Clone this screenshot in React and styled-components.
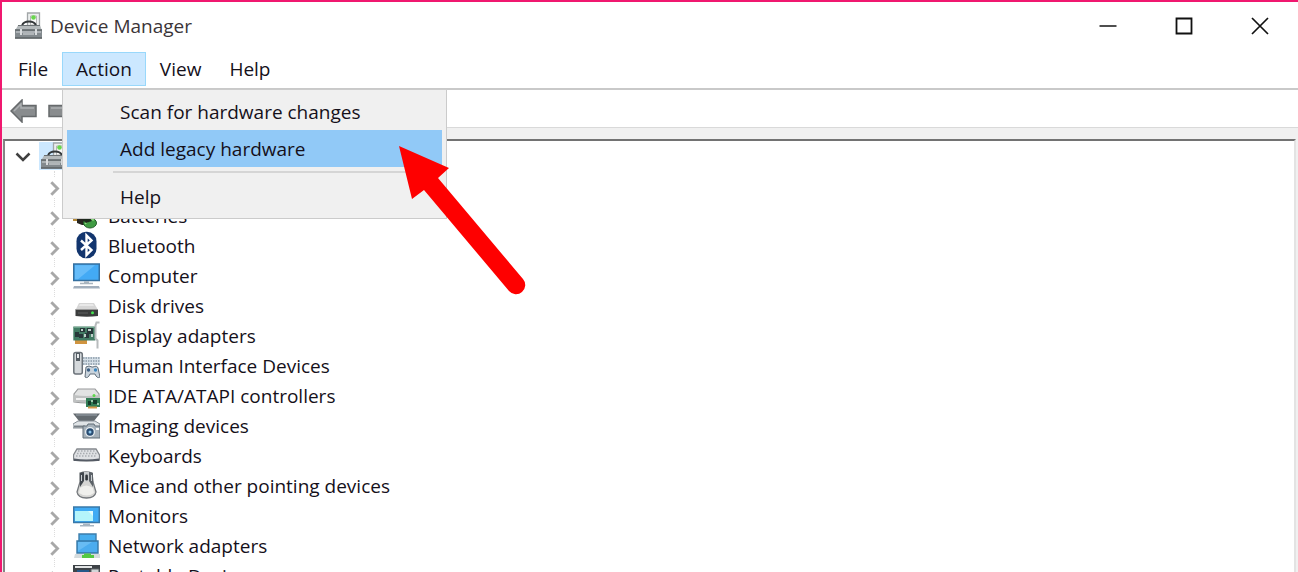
import React, { useState } from "react";
import styled, { createGlobalStyle } from "styled-components";

const GlobalStyle = createGlobalStyle`
  * {
    box-sizing: border-box;
  }

  body {
    margin: 0;
    overflow: hidden;
    background: #fff;
  }

  button {
    font: inherit;
    color: inherit;
    border: none;
    padding: 0;
    background: none;
  }

  svg {
    display: block;
    flex: none;
  }
`;

const Window = styled.main`
  position: relative;
  display: flex;
  flex-direction: column;
  height: 100vh;
  border-top: 2px solid #f0186f;
  border-left: 2px solid #f0186f;
  background: #fff;
  color: #15101a;
  font-family: "Open Sans", "Noto Sans", sans-serif;
  font-size: 19px;
  line-height: 30px;
  overflow: hidden;
`;

const TitleBar = styled.header`
  display: flex;
  align-items: center;
  justify-content: space-between;
  flex: none;
  height: 50px;
  padding: 0 0 2px 13px;
`;

const Title = styled.h1`
  display: flex;
  align-items: center;
  gap: 7px;
  margin: 0;
  color: #3b3538;
  font-size: 19px;
  font-weight: 400;
`;

const WindowButtons = styled.div`
  display: flex;
  height: 100%;
`;

const WindowButton = styled.button`
  display: flex;
  align-items: center;
  justify-content: center;
  width: 76px;

  &:hover {
    background: #e5e5e5;
  }
`;

const MenuBar = styled.nav`
  display: flex;
  flex: none;
  height: 38px;
  padding: 0 2px 2px;
  border-bottom: 2px solid #c9c9c9;
`;

const MenuEntry = styled.div`
  position: relative;
  display: flex;
`;

const MenuButton = styled.button`
  padding: 0 13px;
  border: 1px solid ${(props) => (props.$open ? "#99d8fb" : "transparent")};
  background: ${(props) => (props.$open ? "#cce8ff" : "transparent")};
`;

const Menu = styled.div`
  position: absolute;
  z-index: 2;
  top: 100%;
  left: 0;
  display: flex;
  flex-direction: column;
  width: 385px;
  margin-top: 3px;
  padding: 3px 4px;
  border: 1px solid #cbcbcb;
  background: #f0f0f0;
`;

const MenuItem = styled.button`
  height: 37px;
  padding-left: 53px;
  text-align: left;
  background: ${(props) => (props.$active ? "#91c9f7" : "transparent")};
`;

const MenuSeparator = styled.hr`
  width: calc(100% - 46px);
  margin: 4px 0 5px 46px;
  border: none;
  border-top: 2px solid #d5d5d5;
`;

const Toolbar = styled.div`
  display: flex;
  align-items: center;
  flex: none;
  gap: 11px;
  height: 38px;
  padding: 4px 8px 0;
  border-bottom: 1px solid #d9d9d9;
`;

const Content = styled.section`
  display: flex;
  flex: 1;
  min-height: 0;
  padding: 11px 2px 0 1px;
  background: #f0f0f0;
`;

const TreePane = styled.div`
  flex: 1;
  border-top: 2px solid #727272;
  border-left: 2px solid #858585;
  border-right: 2px solid #e3e3e3;
  background: #fff;
  overflow: hidden;
`;

const RootRow = styled.div`
  display: flex;
  align-items: center;
  gap: 6px;
  height: 30px;
  padding-left: 8px;
`;

const RootIcon = styled.span`
  width: 90px;
  padding: 0 2px;
  background: #cce8ff;
`;

const Branch = styled.ul`
  margin: 0 0 0 49px;
  padding: 0;
  border-left: 1px dotted #dcdcdc;
  list-style: none;
`;

const Row = styled.li`
  display: flex;
  align-items: center;
  height: 30px;
  margin-left: -6px;
`;

const Toggle = styled.button`
  display: flex;
  align-items: center;
  justify-content: center;
  width: 12px;
  height: 20px;
  margin-top: 4px;
  background: #fff;
`;

const RootToggle = styled(Toggle)`
  width: 20px;
  margin-top: 2px;
`;

const RowIcon = styled.svg`
  width: 27px;
  height: 30px;
  margin: 0 8px 0 12px;
`;

const Pointer = styled.svg`
  position: absolute;
  z-index: 3;
  top: 142px;
  left: 395px;
  pointer-events: none;
`;

function DeviceManagerIcon() {
  return (
    <svg width="28" height="28" viewBox="0 0 28 28">
      <path d="M12.500 1h12v16h-12z" fill="#eceeee" stroke="#a2a6a8" strokeWidth="1.300" />
      <path d="M15.500 4h6v9h-6z" fill="#f9f9f9" stroke="#b5b5b5" />
      <circle cx="18.500" cy="5.500" r="2.300" fill="#69d64d" />
      <path d="M7 13.500c1-3 4-4 7-4s6 1 7 4" fill="none" stroke="#34383a" strokeWidth="1.800" />
      <path d="M3 13.500h22l2 5H0z" fill="#b4b9bb" />
      <path d="M3 13.500h22" stroke="#6b7174" />
      <path d="M0 17.500h27v9H0z" fill="#838a8e" />
      <path d="M0 18h27" stroke="#5e6467" strokeWidth="1.300" />
      <path d="M1 20h25" stroke="#b8bdc0" strokeWidth="1.600" />
      <path d="M6 17v6M21 17v6" stroke="#d9dcde" strokeWidth="2" />
      <path d="M8 22h11" stroke="#b1b6b9" strokeWidth="2" />
      <path d="M0 26h27" stroke="#5c6265" strokeWidth="1.500" />
    </svg>
  );
}

function NavArrow({ forward }) {
  return (
    <svg width="27" height="24" viewBox="0 0 27 24">
      <g transform={forward ? "matrix(-1 0 0 1 27 0)" : undefined}>
        <path d="M1 12 12 1v5.500h14v11H12V23z" fill="#898c8e" stroke="#66696b" strokeWidth="1.500" />
        <path d="M4 12l7-7v4h13" fill="none" stroke="#adb0b2" strokeWidth="1.500" />
      </g>
    </svg>
  );
}

function Chevron() {
  return (
    <svg width="10" height="15" viewBox="0 0 10 15">
      <path d="M1.300 1.300 7.500 7.500 1.300 13.700" fill="none" stroke="#a8a8a8" strokeWidth="2.900" />
    </svg>
  );
}

const icons = {
  audio: <path d="M4 11h5l7-6v20l-7-6H4z" fill="#999" />,
  battery: (
    <>
      <path d="M0 18h5v2H0z" fill="#b58a3a" />
      <path d="M4 15h10l5 4-3 5H9l-5-2z" fill="#26241f" />
      <ellipse cx="17" cy="22" rx="6.500" ry="5" fill="#3f9b43" stroke="#245e2a" />
      <path d="M12 23c3-4 6-5 9-4" fill="none" stroke="#8fda7e" strokeWidth="1.500" />
      <path d="M8 17h9l2 3-6 2z" fill="#1d2a1d" />
    </>
  ),
  bluetooth: (
    <>
      <rect x="3.500" y=".8" width="20" height="26.500" rx="9.500" fill="#12356e" />
      <path d="M8 9.500 18.500 19 13.500 24V4.500l5 5L8 19" fill="none" stroke="#fff" strokeWidth="2.400" />
    </>
  ),
  computer: (
    <>
      <path d="M.7 3h25.600v16.500H.7z" fill="#43aaf5" stroke="#356f9f" strokeWidth="1.500" />
      <path d="M2 4.300h20L5 18.300H2z" fill="#66bcf9" />
      <path d="M11 20.300h5v1.500h4v1.500H7v-1.500h4z" fill="#a9b5bf" />
      <path d="M1 25h25l1 2.500H0z" fill="#a2afbd" />
    </>
  ),
  disk: (
    <>
      <path d="M6 12h15l4 7H2.500z" fill="#d6d6d6" />
      <path d="M7 13h13l1 2H6z" fill="#e9e9e9" />
      <path d="M2.500 18.500H25V25q-11 1.500-22.500 0z" fill="#3b3d3d" />
      <path d="M2.500 18.500H25" stroke="#999" />
      <path d="M5 22h10" stroke="#5e6060" />
      <circle cx="19.500" cy="21.700" r="1.500" fill="#45e251" />
    </>
  ),
  display: (
    <>
      <path d="M2 19h12v4H2z" fill="#d09440" />
      <path d="M.3 5.500h22v14H.3z" fill="#417b63" />
      <path d="M1 6.500h20" stroke="#6ea58c" />
      <path d="M2 11h4v5H2zM7 7h5v4H7zM6 13h4v4H6zM12 12h4v5h-4zM14 7h6v6h-6z" fill="#28383a" />
      <path d="M8 8h2v2H8zM15 8h3v2h-3zM11 13h2v3h-2zM18 13h2v3h-2z" fill="#bdd0c9" />
      <path d="M26.500 1.500h-3l-1 3v13l2 2v8" fill="none" stroke="#b8bcbd" strokeWidth="2" />
    </>
  ),
  hid: (
    <>
      <rect x=".8" y="1.500" width="8.500" height="21.500" rx="2" fill="#d5d9dc" stroke="#6b7279" strokeWidth="1.500" />
      <path d="M3 2h4v8H3z" fill="#555d64" />
      <path d="M4 3h2v4H4z" fill="#e8ebed" />
      <path d="M10 6h17v8H10z" fill="#d6e0e8" />
      <path d="M10 7h17M10 10h17M10 13h17" stroke="#8c9ba8" strokeWidth="1.500" strokeDasharray="1.500 1" />
      <path d="M13 16q3-2 6 0h1q4-2 5 1l2 9q-3 2-5-3h-5q-2 5-5 3z" fill="#c9d3dc" stroke="#626f7b" />
      <circle cx="15.500" cy="19" r="1.700" fill="#3c5e82" />
      <circle cx="22.500" cy="19" r="1.700" fill="#3c87bf" />
    </>
  ),
  ide: (
    <>
      <path d="M5 8h17l4 5v8q-12 2-25 0v-8z" fill="#e2e3e3" stroke="#989a9b" strokeWidth="1.200" />
      <path d="M1 14q12 2 25 0v7H1z" fill="#bfc1c1" />
      <path d="M3 18h10" stroke="#f0f0f0" strokeWidth="2" />
      <circle cx="21" cy="14.500" r="1.500" fill="#5dd94b" />
      <path d="M13 17h14v9H13z" fill="#317d55" />
      <path d="M15 20h3v4h-3zM20 19h4v4h-4z" fill="#163d2b" />
      <path d="M18 19h2v2h-2zM24 22h2v2h-2z" fill="#9fcdb0" />
      <path d="M15 26.500h9" stroke="#d59b4b" strokeWidth="2" />
    </>
  ),
  imaging: (
    <>
      <path d="M0 2.500h27l-6 7.500H6z" fill="#646b70" />
      <path d="M3 4h21" stroke="#899198" strokeWidth="1.500" />
      <path d="M5 10h17l5 3v4H0v-4z" fill="#dfe3e6" stroke="#868e95" />
      <path d="M1 15.500h11" stroke="#788087" strokeWidth="2" />
      <path d="M10 15h4l1-2h6l1 2h5v12H10z" fill="#a6b1ba" stroke="#626e78" />
      <circle cx="17" cy="21" r="5" fill="#e7ecef" />
      <circle cx="17" cy="21" r="3.700" fill="#294d73" />
      <circle cx="17" cy="21" r="1.500" fill="#8fc7ec" />
      <path d="M23 17h3v2h-3z" fill="#f4f6f7" />
    </>
  ),
  keyboard: (
    <>
      <path d="M4 8h19l3.500 6v5q-13 2-26 0v-5z" fill="#dfe1e4" stroke="#84888d" strokeWidth="1.300" />
      <path d="M5 10h18M4 12.500h20M3 15h21" stroke="#a9adb1" strokeWidth="1.300" strokeDasharray="1.500 1.500" />
      <path d="M1 17.500q12 2 25 0v2.500H1z" fill="#555b65" />
    </>
  ),
  mouse: (
    <>
      <path d="M7 2q6-2 12 0l1 9 3 10q-1 6-9.500 6T4 21l3-10z" fill="#d5d5d3" stroke="#73777b" strokeWidth="1.300" />
      <path d="M7 2q3-1 4-.5V10l-4 6z" fill="#41474d" />
      <path d="M20 2q-3-1-4-.5V10l4 6z" fill="#5c6268" />
      <path d="M8.500 4v6M18.500 4v6" stroke="#c9cdd1" />
      <path d="M11 1h5v8q-2.500 3-5 0z" fill="#c8cbcd" />
      <rect x="12.300" y="3.500" width="2.600" height="6" rx="1.300" fill="#30353a" />
      <path d="M7 17q6-5 13 0l1 5q-7 5-15 0z" fill="#f0f0ed" />
    </>
  ),
  monitor: (
    <>
      <path d="M.7 6h25.600v15.500H.7z" fill="#40abf4" stroke="#3979a9" strokeWidth="1.500" />
      <path d="M2 10h18v10H2z" fill="#b5f5fb" />
      <path d="M15 10h5v5z" fill="#e0fcff" />
      <path d="M10 22.500h7v1.500h4v1.500H7v-1.500h3z" fill="#a7b5c1" />
    </>
  ),
  network: (
    <>
      <path d="M2 23h25v4H1z" fill="#d5dbdd" />
      <path d="M6 3h17v8H6z" fill="#47aeee" stroke="#3d7eac" strokeWidth="1.400" />
      <path d="M4 10h21v12H4z" fill="#4bacef" stroke="#3677a6" strokeWidth="1.400" />
      <path d="M5 11h14L5 20z" fill="#68bcf4" />
      <path d="M11 22.500h7V24h3v3H9v-3h2z" fill="#55c943" />
    </>
  ),
  portable: (
    <>
      <path d="M0 4h27v20H0z" fill="#3e4348" />
      <path d="M2 5h17v2H2z" fill="#e2e4e5" />
      <path d="M4 9h12v10H4z" fill="#255889" />
      <path d="M18 8h8v15h-8z" fill="#d2d6d8" stroke="#5a6065" />
    </>
  ),
};

const devices = [
  { icon: "audio", label: "" },
  { icon: "battery", label: "Batteries" },
  { icon: "bluetooth", label: "Bluetooth" },
  { icon: "computer", label: "Computer" },
  { icon: "disk", label: "Disk drives" },
  { icon: "display", label: "Display adapters" },
  { icon: "hid", label: "Human Interface Devices" },
  { icon: "ide", label: "IDE ATA/ATAPI controllers" },
  { icon: "imaging", label: "Imaging devices" },
  { icon: "keyboard", label: "Keyboards" },
  { icon: "mouse", label: "Mice and other pointing devices" },
  { icon: "monitor", label: "Monitors" },
  { icon: "network", label: "Network adapters" },
  { icon: "portable", label: "Portable Devices" },
];

const actions = ["Scan for hardware changes", "Add legacy hardware"];

function App() {
  const [openMenu, setOpenMenu] = useState("Action");
  const [activeItem, setActiveItem] = useState("Add legacy hardware");

  return (
    <Window>
      <GlobalStyle />
      <TitleBar>
        <Title>
          <DeviceManagerIcon />
          Device Manager
        </Title>
        <WindowButtons>
          <WindowButton aria-label="Minimize">
            <svg width="18" height="18" viewBox="0 0 18 18">
              <path d="M.5 9h17" stroke="#222" strokeWidth="1.600" />
            </svg>
          </WindowButton>
          <WindowButton aria-label="Maximize">
            <svg width="18" height="18" viewBox="0 0 18 18">
              <path d="M1.500 1.500h15v15h-15z" fill="none" stroke="#111" strokeWidth="1.800" />
            </svg>
          </WindowButton>
          <WindowButton aria-label="Close">
            <svg width="18" height="18" viewBox="0 0 18 18">
              <path d="M1 1l16 16M17 1 1 17" stroke="#111" strokeWidth="1.700" />
            </svg>
          </WindowButton>
        </WindowButtons>
      </TitleBar>

      <MenuBar>
        {["File", "Action", "View", "Help"].map((name) => (
          <MenuEntry key={name}>
            <MenuButton $open={openMenu === name} onClick={() => setOpenMenu(name)}>
              {name}
            </MenuButton>
            {name === "Action" && openMenu === "Action" && (
              <Menu>
                {actions.map((action) => (
                  <MenuItem
                    key={action}
                    $active={activeItem === action}
                    onMouseEnter={() => setActiveItem(action)}
                  >
                    {action}
                  </MenuItem>
                ))}
                <MenuSeparator />
                <MenuItem $active={activeItem === "Help"} onMouseEnter={() => setActiveItem("Help")}>
                  Help
                </MenuItem>
              </Menu>
            )}
          </MenuEntry>
        ))}
      </MenuBar>

      <Toolbar>
        <button aria-label="Back">
          <NavArrow />
        </button>
        <button aria-label="Forward">
          <NavArrow forward />
        </button>
      </Toolbar>

      <Content>
        <TreePane>
          <RootRow>
            <RootToggle aria-label="Collapse">
              <svg width="16" height="10" viewBox="0 0 16 10">
                <path d="M1.500 1.500 8 8l6.500-6.500" fill="none" stroke="#404040" strokeWidth="2.500" />
              </svg>
            </RootToggle>
            <RootIcon>
              <DeviceManagerIcon />
            </RootIcon>
          </RootRow>
          <Branch>
            {devices.map((device) => (
              <Row key={device.icon}>
                <Toggle aria-label="Expand">
                  <Chevron />
                </Toggle>
                <RowIcon viewBox="0 0 27 30">{icons[device.icon]}</RowIcon>
                <span>{device.label}</span>
              </Row>
            ))}
          </Branch>
        </TreePane>
      </Content>

      <Pointer width="132" height="154" viewBox="0 0 132 154">
        <path d="M2 2 52 24 41 34 126 135A9 9 0 0 1 112 147L27 46 15 55z" fill="#fe0000" />
      </Pointer>
    </Window>
  );
}

export default App;
